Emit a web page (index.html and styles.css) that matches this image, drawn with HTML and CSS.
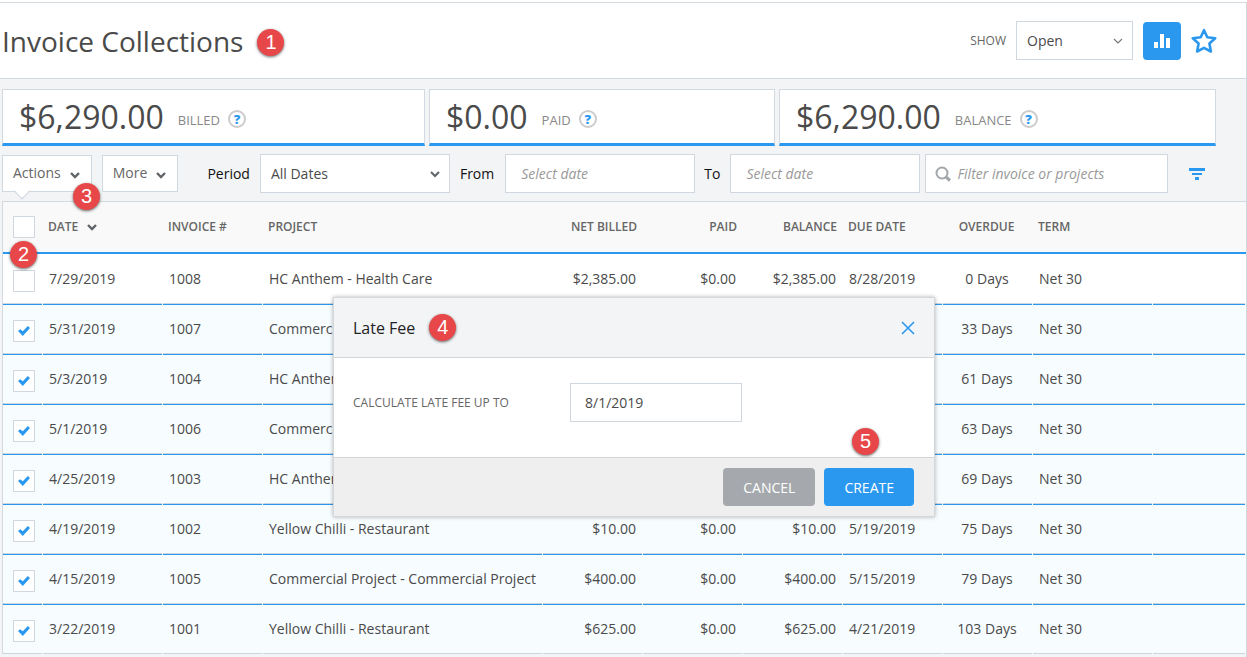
FILE: index.html
```
<!DOCTYPE html>
<html lang="en">
<head>
    <meta charset="UTF-8">
    <meta name="viewport" content="width=device-width, initial-scale=1.0">
    <title>Invoice Collections</title>
    <link rel="stylesheet" href="styles.css">
</head>
<body>
<div class="page">

    <!-- Page header -->
    <header class="page-header">
        <h1>Invoice Collections</h1>
        <span class="step step-title">1</span>
        <div class="header-tools">
            <label for="show">Show</label>
            <div class="select-wrap show-select">
                <select id="show">
                    <option>Open</option>
                    <option>Closed</option>
                    <option>All</option>
                </select>
                <svg class="chevron" width="10" height="8" viewBox="0 0 10 8"><path d="M1 2l4 4 4-4" fill="none" stroke="#777" stroke-width="1.2"/></svg>
            </div>
            <button type="button" class="chart-btn" aria-label="Chart">
                <svg width="16" height="14" viewBox="0 0 16 14" fill="#fff"><rect x="0" y="8" width="4" height="6"/><rect x="6" y="0" width="4" height="14"/><rect x="12" y="4" width="4" height="10"/></svg>
            </button>
            <button type="button" class="star-btn" aria-label="Favorite">
                <svg width="26" height="26" viewBox="0 0 26 26"><path d="M13 2.200l3.300 7 7.900 1-5.800 5.300 1.500 8L13 19.800l-6.900 3.700 1.500-8-5.800-5.300 7.900-1z" fill="#fff" stroke="#2b98f0" stroke-width="2.600" stroke-linejoin="round"/></svg>
            </button>
        </div>
    </header>

    <!-- Totals -->
    <section class="totals">
        <div class="total total-billed">
            <span class="amount">$6,290.00</span>
            <span class="caption">Billed</span>
            <button type="button" class="help">?</button>
        </div>
        <div class="total total-paid">
            <span class="amount">$0.00</span>
            <span class="caption">Paid</span>
            <button type="button" class="help">?</button>
        </div>
        <div class="total total-balance">
            <span class="amount">$6,290.00</span>
            <span class="caption">Balance</span>
            <button type="button" class="help">?</button>
        </div>
    </section>

    <!-- Filters -->
    <div class="toolbar">
        <div class="actions">
            <button type="button" class="menu-btn">Actions
                <svg width="10" height="8" viewBox="0 0 10 8"><path d="M1 2l4 4 4-4" fill="none" stroke="#5f6469" stroke-width="2.400"/></svg>
            </button>
            <span class="step step-actions">3</span>
        </div>
        <button type="button" class="menu-btn">More
            <svg width="10" height="8" viewBox="0 0 10 8"><path d="M1 2l4 4 4-4" fill="none" stroke="#5f6469" stroke-width="2.400"/></svg>
        </button>
        <label class="period-label" for="period">Period</label>
        <div class="select-wrap period-select">
            <select id="period">
                <option>All Dates</option>
                <option>This Month</option>
                <option>This Year</option>
            </select>
            <svg class="chevron" width="10" height="8" viewBox="0 0 10 8"><path d="M1 2l4 4 4-4" fill="none" stroke="#5f6469" stroke-width="2"/></svg>
        </div>
        <label class="from-label" for="from">From</label>
        <input class="date-input" id="from" type="text" placeholder="Select date">
        <label class="to-label" for="to">To</label>
        <input class="date-input" id="to" type="text" placeholder="Select date">
        <div class="search">
            <svg width="16" height="16" viewBox="0 0 16 16" fill="none" stroke="#a3a7ab"><circle cx="7" cy="7" r="5.500" stroke-width="2"/><path d="M11 11l4 3.500" stroke-width="3"/></svg>
            <input type="text" aria-label="Filter" placeholder="Filter invoice or projects">
        </div>
        <button type="button" class="filter-btn" aria-label="More filters">
            <svg width="16" height="12" viewBox="0 0 16 12" fill="#2b98f0"><rect x="0" y="0" width="16" height="3"/><rect x="3" y="5" width="10" height="2"/><rect x="6" y="9" width="4" height="3"/></svg>
        </button>
    </div>

    <!-- Invoices -->
    <div class="grid-wrap">
        <table class="grid">
            <colgroup>
                <col class="c-check"><col class="c-date"><col class="c-num"><col class="c-project">
                <col class="c-num"><col class="c-num"><col class="c-num"><col class="c-num">
                <col class="c-overdue"><col class="c-date"><col>
            </colgroup>
            <thead>
                <tr>
                    <th><input type="checkbox" aria-label="Select all"><span class="step step-check">2</span></th>
                    <th>Date <svg class="sort" width="10" height="8" viewBox="0 0 10 8"><path d="M1 2l4 4 4-4" fill="none" stroke="#5f6469" stroke-width="2.400"/></svg></th>
                    <th>Invoice #</th>
                    <th>Project</th>
                    <th class="money">Net Billed</th>
                    <th class="money">Paid</th>
                    <th class="money">Balance</th>
                    <th>Due Date</th>
                    <th class="days">Overdue</th>
                    <th>Term</th>
                    <th></th>
                </tr>
            </thead>
            <tbody>
                <tr>
                    <td><input type="checkbox" aria-label="Invoice 1008"></td>
                    <td>7/29/2019</td><td>1008</td><td>HC Anthem - Health Care</td>
                    <td class="money">$2,385.00</td><td class="money">$0.00</td><td class="money">$2,385.00</td>
                    <td>8/28/2019</td><td class="days">0 Days</td><td>Net 30</td><td></td>
                </tr>
                <tr class="selected">
                    <td><input type="checkbox" aria-label="Invoice 1007" checked></td>
                    <td>5/31/2019</td><td>1007</td><td>Commercial Project</td>
                    <td class="money"></td><td class="money"></td><td class="money"></td>
                    <td></td><td class="days">33 Days</td><td>Net 30</td><td></td>
                </tr>
                <tr class="selected">
                    <td><input type="checkbox" aria-label="Invoice 1004" checked></td>
                    <td>5/3/2019</td><td>1004</td><td>HC Anthem - Health Care</td>
                    <td class="money"></td><td class="money"></td><td class="money"></td>
                    <td></td><td class="days">61 Days</td><td>Net 30</td><td></td>
                </tr>
                <tr class="selected">
                    <td><input type="checkbox" aria-label="Invoice 1006" checked></td>
                    <td>5/1/2019</td><td>1006</td><td>Commercial Project</td>
                    <td class="money"></td><td class="money"></td><td class="money"></td>
                    <td></td><td class="days">63 Days</td><td>Net 30</td><td></td>
                </tr>
                <tr class="selected">
                    <td><input type="checkbox" aria-label="Invoice 1003" checked></td>
                    <td>4/25/2019</td><td>1003</td><td>HC Anthem - Health Care</td>
                    <td class="money"></td><td class="money"></td><td class="money"></td>
                    <td></td><td class="days">69 Days</td><td>Net 30</td><td></td>
                </tr>
                <tr class="selected">
                    <td><input type="checkbox" aria-label="Invoice 1002" checked></td>
                    <td>4/19/2019</td><td>1002</td><td>Yellow Chilli - Restaurant</td>
                    <td class="money">$10.00</td><td class="money">$0.00</td><td class="money">$10.00</td>
                    <td>5/19/2019</td><td class="days">75 Days</td><td>Net 30</td><td></td>
                </tr>
                <tr class="selected">
                    <td><input type="checkbox" aria-label="Invoice 1005" checked></td>
                    <td>4/15/2019</td><td>1005</td><td>Commercial Project - Commercial Project</td>
                    <td class="money">$400.00</td><td class="money">$0.00</td><td class="money">$400.00</td>
                    <td>5/15/2019</td><td class="days">79 Days</td><td>Net 30</td><td></td>
                </tr>
                <tr class="selected">
                    <td><input type="checkbox" aria-label="Invoice 1001" checked></td>
                    <td>3/22/2019</td><td>1001</td><td>Yellow Chilli - Restaurant</td>
                    <td class="money">$625.00</td><td class="money">$0.00</td><td class="money">$625.00</td>
                    <td>4/21/2019</td><td class="days">103 Days</td><td>Net 30</td><td></td>
                </tr>
            </tbody>
        </table>

        <!-- Late fee dialog -->
        <div class="modal" role="dialog" aria-labelledby="modal-title">
            <div class="modal-header">
                <h2 id="modal-title">Late Fee</h2>
                <span class="step">4</span>
                <button type="button" class="close-btn" aria-label="Close">
                    <svg width="14" height="14" viewBox="0 0 14 14"><path d="M1 1l12 12M13 1L1 13" stroke="#2b98f0" stroke-width="1.600"/></svg>
                </button>
            </div>
            <div class="modal-body">
                <label for="fee-date">Calculate late fee up to</label>
                <input id="fee-date" type="text" value="8/1/2019">
            </div>
            <div class="modal-footer">
                <button type="button" class="btn btn-cancel">Cancel</button>
                <button type="button" class="btn btn-create">Create</button>
                <span class="step step-create">5</span>
            </div>
        </div>
    </div>

</div>
</body>
</html>
```
FILE: styles.css
```
* {
    box-sizing: border-box;
}

body {
    margin: 0;
    padding-top: 2px;
    background-color: #fff;
    color: #4a4a4a;
    font-family: "Open Sans", sans-serif;
    font-size: 14px;
}

button, input, select {
    font-family: inherit;
    font-size: 14px;
    color: inherit;
}

button {
    padding: 0;
    border: none;
    background: none;
    cursor: pointer;
}

svg {
    display: block;
}

.page {
    min-height: calc(100vh - 2px);
    border-top: 1px solid #d3d9e0;
    border-right: 1px solid #d3d9e0;
    background-color: #f3f4f6;
}

/* Numbered red markers */
.step {
    display: flex;
    align-items: center;
    justify-content: center;
    width: 27px;
    height: 27px;
    padding-bottom: 2px;
    border-radius: 50%;
    background-color: #e84749;
    color: #fff;
    font-family: "Liberation Sans", sans-serif;
    font-size: 20px;
    font-weight: 400;
    line-height: 1;
    box-shadow: 0 1px 3px rgba(0, 0, 0, 0.6);
}

/* Header */
.page-header {
    display: flex;
    align-items: center;
    height: 76px;
    padding: 0 29px 0 2px;
    background-color: #fff;
    border-bottom: 1px solid #d3d9e0;
}

.page-header h1 {
    margin: 0 14px 0 0;
    font-size: 28px;
    font-weight: 400;
    line-height: 38px;
}

.step-title {
    margin-top: 4px;
}

.header-tools {
    display: flex;
    align-items: center;
    margin-left: auto;
}

.header-tools label {
    margin-right: 10px;
    color: #666;
    font-size: 12px;
    text-transform: uppercase;
}

.select-wrap {
    position: relative;
}

.select-wrap select {
    width: 100%;
    height: 39px;
    padding: 0 10px;
    border: 1px solid #d0d7df;
    border-radius: 0;
    background-color: #fff;
    appearance: none;
}

.select-wrap .chevron {
    position: absolute;
    top: 16px;
    right: 10px;
    pointer-events: none;
}

.show-select {
    width: 117px;
    margin-right: 10px;
}

.chart-btn {
    display: flex;
    align-items: center;
    justify-content: center;
    width: 38px;
    height: 38px;
    margin-right: 10px;
    border-radius: 4px;
    background-color: #2b98f0;
}

/* Totals */
.totals {
    display: flex;
    gap: 4px;
    padding: 10px 30px 0 2px;
}

.total {
    display: flex;
    align-items: center;
    height: 57px;
    padding: 0 16px;
    border: 1px solid #d3d9e0;
    border-bottom: 3px solid #2b98f0;
    background-color: #fff;
}

.total-billed {
    flex: 389;
}

.total-paid {
    flex: 312;
}

.total-balance {
    flex: 403;
}

.amount {
    margin-right: 14px;
    font-size: 32px;
    font-weight: 400;
}

.caption {
    margin-right: 8px;
    padding-top: 6px;
    color: #888;
    font-size: 13px;
    text-transform: uppercase;
}

.help {
    width: 18px;
    height: 18px;
    margin-top: 4px;
    border: 2px solid #ccc;
    border-radius: 50%;
    color: #2b98f0;
    font-size: 13px;
    font-weight: 800;
    line-height: 14px;
}

/* Toolbar */
.toolbar {
    display: flex;
    align-items: center;
    padding: 8px 41px 8px 2px;
}

.toolbar label {
    color: #111;
}

.actions {
    position: relative;
    margin-right: 10px;
}

.menu-btn {
    display: flex;
    align-items: center;
    gap: 9px;
    height: 37px;
    padding: 0 11px 2px 10px;
    border: 1px solid #d0d9e0;
    background-color: #fff;
    color: #666;
}

.menu-btn svg {
    margin-top: 4px;
}

/* Pointer under the Actions button */
.actions::after {
    content: '';
    position: absolute;
    left: 14px;
    bottom: -5px;
    width: 11px;
    height: 11px;
    border: solid #d0d9e0;
    border-width: 0 1px 1px 0;
    background: linear-gradient(135deg, transparent 50%, #fff 50%);
    transform: rotate(45deg);
}

.step-actions {
    position: absolute;
    top: 28px;
    left: 71px;
    z-index: 1;
}

.period-label {
    margin: 0 10px 0 29px;
}

.period-select {
    width: 190px;
}

.from-label {
    margin: 0 11px 0 10px;
}

.to-label {
    margin: 0 10px 0 9px;
}

.date-input, .search {
    height: 39px;
    border: 1px solid #d0d7df;
    background-color: #fff;
}

.date-input {
    width: 190px;
    padding: 0 15px;
}

::placeholder {
    color: #999;
    font-style: italic;
    opacity: 1;
}

.search {
    display: flex;
    flex: 1;
    align-items: center;
    gap: 6px;
    margin: 0 21px 0 5px;
    padding: 0 9px;
}

.search input {
    flex: 1;
    min-width: 0;
    padding: 0;
    border: none;
    outline: none;
}

.filter-btn {
    display: flex;
    justify-content: center;
    width: 16px;
}

/* Invoice grid */
.grid-wrap {
    position: relative;
    margin-left: 2px;
    border-top: 1px solid #d3d9e0;
    border-left: 1px solid #d3d9e0;
}

.grid {
    width: 100%;
    table-layout: fixed;
    border-collapse: separate;
    border-spacing: 0;
}

.c-check {
    width: 40px;
}

.c-date {
    width: 120px;
}

.c-num {
    width: 100px;
}

.c-project {
    width: 280px;
}

.c-overdue {
    width: 90px;
}

.grid th, .grid td {
    padding: 0 6px 2px;
    text-align: left;
    white-space: nowrap;
}

.grid th {
    position: relative;
    height: 52px;
    padding: 0 5px 2px;
    border-bottom: 2px solid #2b98f0;
    background-color: #f9f9f9;
    color: #666;
    font-size: 12px;
    font-weight: 600;
    text-transform: uppercase;
}

.grid td {
    height: 50px;
    background: linear-gradient(#ccd6df, #ccd6df) 0 100% / calc(100% - 1px) 1px no-repeat #fff;
}

.grid .selected td {
    background:
        linear-gradient(#2b98f0, #2b98f0) 0 0 / calc(100% - 1px) 1px no-repeat,
        linear-gradient(#ccd6df, #ccd6df) 0 100% / calc(100% - 1px) 1px no-repeat,
        #f7fcff;
}

.grid th:first-child {
    padding: 0 0 0 10px;
}

.grid td:first-child {
    padding: 4px 0 0 10px;
}

.grid th.money {
    padding-right: 6px;
    text-align: right;
}

.grid td.money {
    padding-right: 7px;
    text-align: right;
}

.grid .days {
    padding-right: 8px;
    text-align: center;
}

.sort {
    display: inline-block;
    margin-left: 6px;
    vertical-align: 0;
}

input[type="checkbox"] {
    display: block;
    width: 22px;
    height: 22px;
    margin: 0;
    border: 1px solid #d0d7df;
    background-color: #fff;
    appearance: none;
}

input[type="checkbox"]:checked::before {
    content: '';
    display: block;
    width: 12px;
    height: 10px;
    margin: 5px 4px;
    background-color: #2b98f0;
    clip-path: polygon(0 50%, 18% 32%, 40% 52%, 82% 0, 100% 20%, 40% 100%);
}

.step-check {
    position: absolute;
    top: 39px;
    left: 7px;
    z-index: 1;
}

/* Late fee dialog */
.modal {
    position: absolute;
    top: 95px;
    left: 330px;
    width: 602px;
    border: 1px solid #d5d8da;
    background-color: #fff;
    box-shadow: 0 0 4px rgba(0, 0, 0, 0.3);
}

.modal-header {
    display: flex;
    align-items: center;
    height: 60px;
    padding: 0 19px;
    border-bottom: 1px solid #d3d5d7;
    background-color: #f3f4f6;
}

.modal-header h2 {
    margin: 0 14px 0 0;
    color: #222;
    font-size: 16px;
    font-weight: 400;
}

.close-btn {
    margin-left: auto;
}

.modal-body {
    display: flex;
    align-items: center;
    padding: 25px 19px 35px;
}

.modal-body label {
    width: 217px;
    color: #666;
    font-size: 12px;
    text-transform: uppercase;
}

.modal-body input {
    width: 172px;
    height: 39px;
    padding: 0 14px;
    border: 1px solid #d0d7df;
}

.modal-footer {
    position: relative;
    display: flex;
    justify-content: flex-end;
    gap: 9px;
    padding: 10px 20px;
    border-top: 1px solid #d3d5d7;
    background-color: #efefef;
}

.btn {
    height: 38px;
    padding: 0 20px;
    border-radius: 4px;
    color: #fff;
    font-weight: 400;
    text-transform: uppercase;
}

.btn-cancel {
    background-color: #a5a9ad;
}

.btn-create {
    background-color: #2b98f0;
}

.step-create {
    position: absolute;
    top: -30px;
    right: 55px;
}
```
